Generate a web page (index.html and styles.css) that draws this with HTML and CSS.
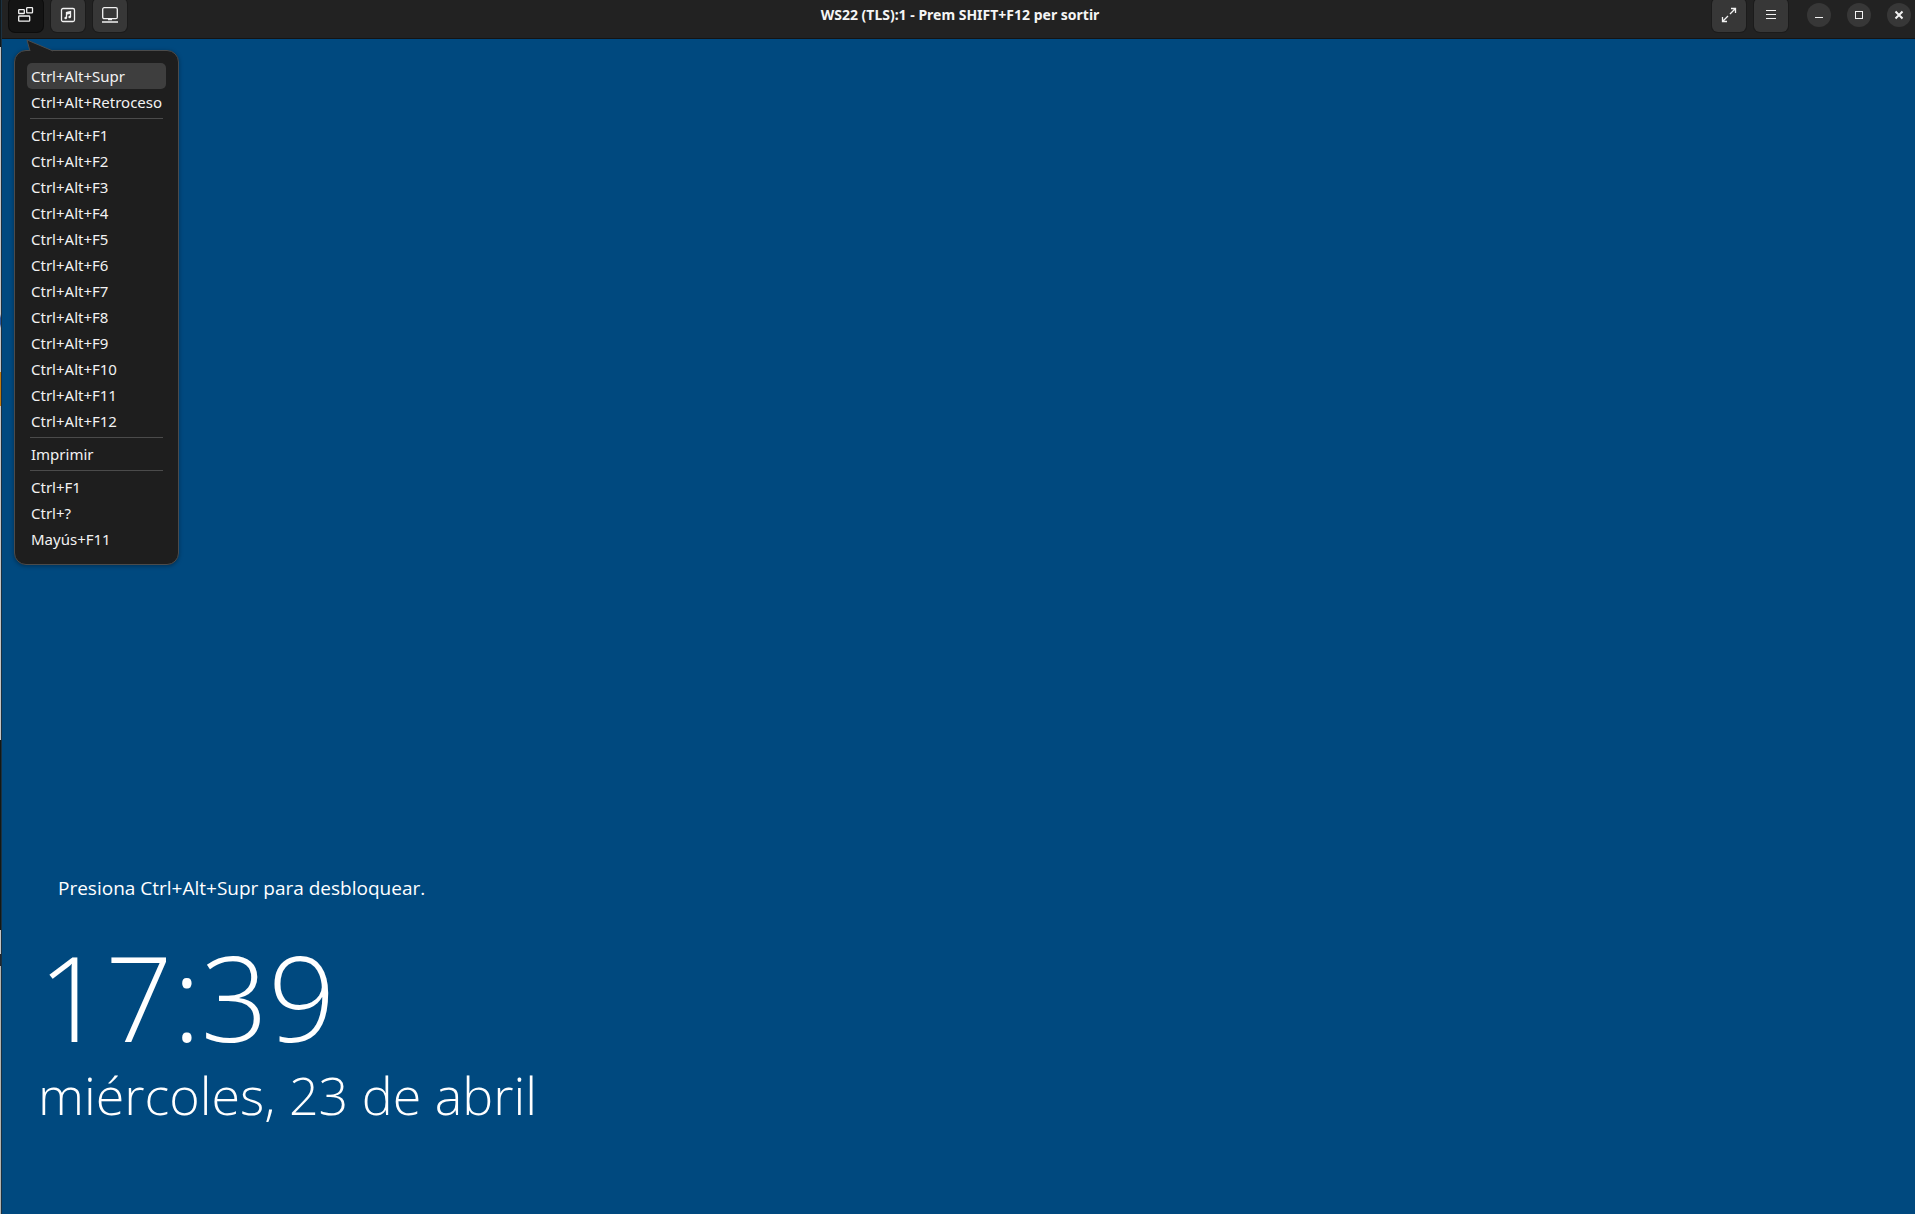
FILE: index.html
```html
<!DOCTYPE html>
<html lang="es">
<head>
  <meta charset="UTF-8">
  <meta name="viewport" content="width=device-width, initial-scale=1.0">
  <title>WS22 (TLS):1 - Prem SHIFT+F12 per sortir</title>
  <link rel="stylesheet" href="styles.css">
</head>
<body>
  <!-- Strip of the desktop left of the window -->
  <div class="desktop-edge"></div>

  <div class="window">
    <!-- Title bar with viewer tools and window controls -->
    <header class="titlebar">
      <div class="tools">
        <div class="keys">
          <button class="tool active" aria-label="Enviar teclas" aria-expanded="true">
            <svg width="16" height="16" viewBox="0 0 16 16"><rect x="0.7" y="2.7" width="5.6" height="3.8" rx="0.6"/><rect x="8.7" y="0.7" width="5.8" height="5.2" rx="0.6"/><rect x="0.7" y="9" width="11" height="5.2" rx="0.8"/></svg>
          </button>

          <!-- Key combination menu -->
          <div class="menu" role="menu">
            <svg class="arrow" width="28" height="13" viewBox="0 0 28 13"><path d="M4 12L1 1L27 12"/></svg>
            <button class="item selected" role="menuitem">Ctrl+Alt+Supr</button>
            <button class="item" role="menuitem">Ctrl+Alt+Retroceso</button>
            <hr>
            <button class="item" role="menuitem">Ctrl+Alt+F1</button>
            <button class="item" role="menuitem">Ctrl+Alt+F2</button>
            <button class="item" role="menuitem">Ctrl+Alt+F3</button>
            <button class="item" role="menuitem">Ctrl+Alt+F4</button>
            <button class="item" role="menuitem">Ctrl+Alt+F5</button>
            <button class="item" role="menuitem">Ctrl+Alt+F6</button>
            <button class="item" role="menuitem">Ctrl+Alt+F7</button>
            <button class="item" role="menuitem">Ctrl+Alt+F8</button>
            <button class="item" role="menuitem">Ctrl+Alt+F9</button>
            <button class="item" role="menuitem">Ctrl+Alt+F10</button>
            <button class="item" role="menuitem">Ctrl+Alt+F11</button>
            <button class="item" role="menuitem">Ctrl+Alt+F12</button>
            <hr>
            <button class="item" role="menuitem">Imprimir</button>
            <hr>
            <button class="item" role="menuitem">Ctrl+F1</button>
            <button class="item" role="menuitem">Ctrl+?</button>
            <button class="item" role="menuitem">Mayús+F11</button>
          </div>
        </div>
        <button class="tool" aria-label="Audio">
          <svg width="16" height="16" viewBox="0 0 16 16"><rect x="1.5" y="1.5" width="13" height="13" rx="1.5"/><path d="M6.5 11V5.5L10.5 4.5V10M6.5 7L10.5 6"/><circle class="fill" cx="5.7" cy="11" r="1.3"/><circle class="fill" cx="9.7" cy="10" r="1.3"/></svg>
        </button>
        <button class="tool" aria-label="Pantalla">
          <svg width="16" height="16" viewBox="0 0 16 16"><rect x="0.7" y="0.7" width="14.6" height="11" rx="1.5"/><path d="M6 12.5H10M0 15H16"/></svg>
        </button>
      </div>

      <h1 class="title">WS22 (TLS):1 - Prem SHIFT+F12 per sortir</h1>

      <div class="controls">
        <button class="tool" aria-label="Pantalla completa">
          <svg width="16" height="16" viewBox="0 0 16 16"><path d="M9 7L14.5 1.5M10 1.5H14.5V6M7 9L1.5 14.5M1.5 10V14.5H6"/></svg>
        </button>
        <button class="tool" aria-label="Menú">
          <svg width="16" height="16" viewBox="0 0 16 16" shape-rendering="crispEdges"><path d="M3 3.5H13M3 7.5H13M3 11.5H13"/></svg>
        </button>
        <div class="window-buttons">
          <button class="round" aria-label="Minimizar">
            <svg width="16" height="16" viewBox="0 0 16 16" shape-rendering="crispEdges"><path d="M4 10.5H12"/></svg>
          </button>
          <button class="round" aria-label="Maximizar">
            <svg width="16" height="16" viewBox="0 0 16 16" shape-rendering="crispEdges"><rect x="4.5" y="4.5" width="7" height="7"/></svg>
          </button>
          <button class="round" aria-label="Cerrar">
            <svg width="16" height="16" viewBox="0 0 16 16"><path class="cross" d="M4.5 4.5L11.5 11.5M11.5 4.5L4.5 11.5"/></svg>
          </button>
        </div>
      </div>
    </header>

    <!-- Remote lock screen -->
    <main class="lock-screen">
      <p class="hint">Presiona Ctrl+Alt+Supr para desbloquear.</p>
      <time class="clock">17:39</time>
      <p class="date">miércoles, 23 de abril</p>
    </main>
  </div>
</body>
</html>
```
FILE: styles.css
```css
/* Basic styling */
* {
  box-sizing: border-box;
}

body {
  margin: 0;
  display: flex;
  height: 100vh;
  overflow: hidden;
  background: #00497f;
  font-family: "Noto Sans", sans-serif;
  color: #fff;
}

button {
  border: none;
  padding: 0;
  font: inherit;
  color: inherit;
}

svg {
  display: block;
  fill: none;
  stroke: #f2f2f2;
  stroke-width: 1.3;
}

.fill {
  fill: #f2f2f2;
  stroke: none;
}

.cross {
  stroke-width: 2;
}

/* Strip of the desktop */
.desktop-edge {
  flex: none;
  width: 2px;
  border-right: 1px solid #1c3140;
  background: linear-gradient(#10191d 47px, #c4c4c4 47px 314px, #2456a0 318px 324px, #c4c4c4 328px 372px, #c07a10 372px 406px, #c4c4c4 406px 740px, #141814 740px 930px, #c4c4c4 930px 954px, #202830 954px 966px, #b4b4b0 966px);
}

/* Window */
.window {
  flex: 1;
  display: flex;
  flex-direction: column;
}

.titlebar {
  display: grid;
  grid-template-columns: 1fr auto 1fr;
  grid-template-rows: 100%;
  align-items: center;
  height: 39px;
  padding: 0 4px 8px 7px;
  background: #222;
  border-bottom: 1px solid #141414;
}

.tools,
.controls {
  display: flex;
  align-items: center;
  gap: 8px;
}

.controls {
  justify-content: flex-end;
}

.title {
  margin: 0;
  font-size: 14px;
  font-weight: 700;
  line-height: 20px;
  color: #f5f5f5;
}

.tool {
  display: grid;
  place-items: center;
  width: 34px;
  height: 34px;
  border-radius: 6px;
  background: #373737;
  box-shadow: 0 0 0 1px #1b1b1b;
}

.tool.active {
  background: #141414;
  box-shadow: 0 0 0 1px #0c0c0c;
}

.window-buttons {
  display: flex;
  gap: 16px;
  margin-left: 11px;
}

.round {
  display: grid;
  place-items: center;
  width: 24px;
  height: 24px;
  border-radius: 50%;
  background: #373737;
}

/* Key combination menu */
.keys {
  position: relative;
}

.menu {
  position: absolute;
  top: 52px;
  left: 5px;
  padding: 12px;
  border: 1px solid #4b4b4b;
  border-radius: 12px;
  background: #1e1e1e;
  box-shadow: 0 1px 4px rgba(0, 0, 0, 0.35);
  font-size: 15px;
}

.menu .arrow {
  position: absolute;
  top: -12px;
  left: 11px;
  fill: #1e1e1e;
  stroke: #4b4b4b;
  stroke-width: 1;
}

.item {
  display: block;
  width: 100%;
  height: 26px;
  padding: 0 4px;
  border-radius: 5px;
  background: none;
  line-height: 26px;
  text-align: left;
  white-space: nowrap;
  color: #f2f2f2;
}

.item.selected {
  background: #3e3e3e;
}

.menu hr {
  height: 1px;
  margin: 3px;
  border: none;
  background: #4b4b4b;
}

/* Lock screen */
.lock-screen {
  flex: 1;
  display: flex;
  flex-direction: column;
  justify-content: flex-end;
  padding: 0 36px 83px;
  font-family: "Open Sans", "Noto Sans", sans-serif;
}

.hint {
  margin: 0 20px 33px;
  font-size: 19px;
  line-height: 28px;
}

.clock {
  font-size: 118px;
  font-weight: 300;
  line-height: 124px;
}

.date {
  margin: 0;
  font-size: 52px;
  font-weight: 300;
  line-height: 72px;
}
```
